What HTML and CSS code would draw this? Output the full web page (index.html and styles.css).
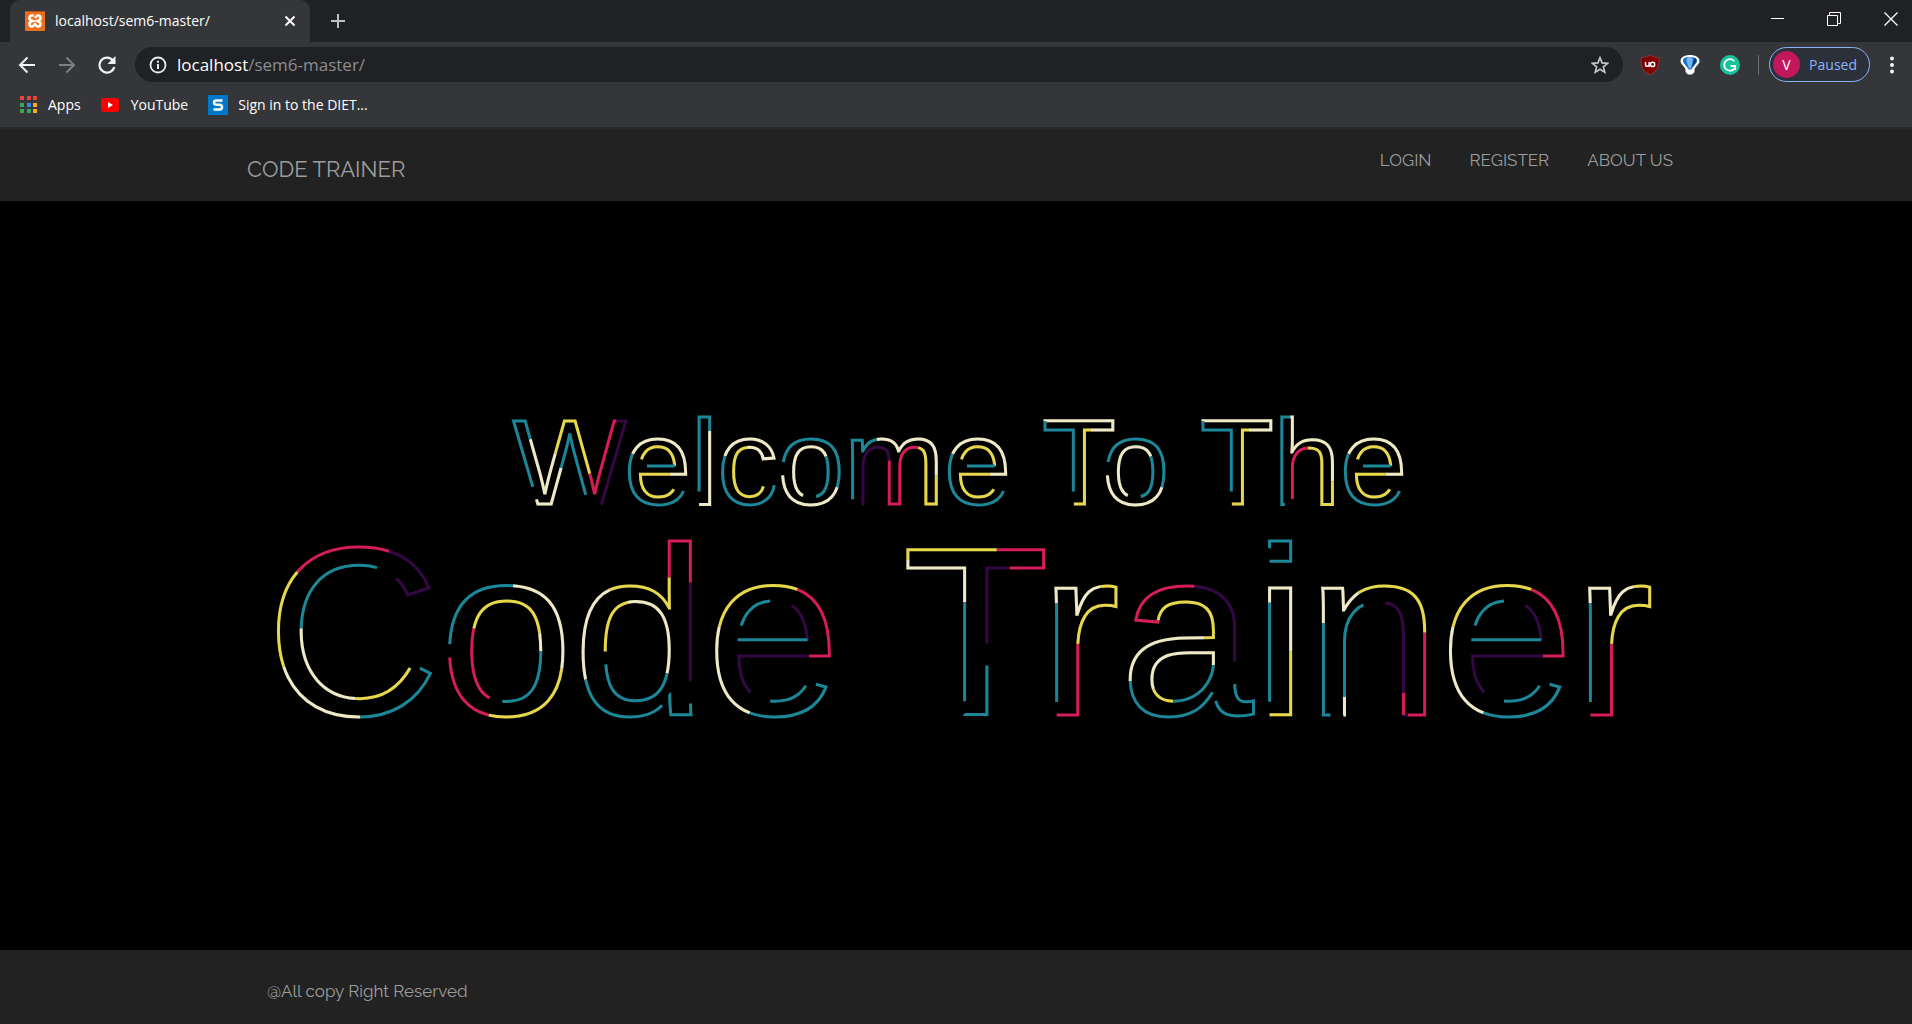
FILE: index.html
```html
<!DOCTYPE html>
<html lang="en">
<head>
<meta charset="utf-8">
<title>localhost/sem6-master/</title>
<link rel="stylesheet" href="styles.css">
</head>
<body>
<div class="browser">
  <div class="tab-strip">
    <div class="tab">
      <svg class="favicon" width="20" height="20" viewBox="0 0 20 20"><rect width="20" height="20" rx="1" fill="#e8701f"/><rect x="1" y="0" width="18" height="1" fill="#b9521a"/><path d="M8.800 4.500H6.500A2.500 2.500 0 0 0 5.800 9.200L7.500 10l-1.700.8A2.500 2.500 0 0 0 6.500 15.500h1.300L10 13l2.200 2.500h1.300a2.500 2.500 0 0 0 .7-4.700L12.500 10l1.700-.8a2.500 2.500 0 0 0-.7-4.700h-1.300L10 7" fill="none" stroke="#fff" stroke-width="2.600" stroke-linejoin="round"/><path d="M7.500 10h5" stroke="#fff" stroke-width="1.500"/></svg>
      <span class="tab-title">localhost/sem6-master/</span>
      <button class="tab-close" aria-label="Close tab"><svg width="12" height="12" viewBox="0 0 12 12"><path d="M1.500 1.500l9 9M10.500 1.500l-9 9" stroke="#fff" stroke-width="2"/></svg></button>
    </div>
    <button class="new-tab" aria-label="New tab"><svg width="16" height="16" viewBox="0 0 16 16"><path d="M8 1v14M1 8h14" stroke="#bdc1c6" stroke-width="2"/></svg></button>
    <div class="window-controls">
      <button aria-label="Minimize"><svg width="14" height="14" viewBox="0 0 14 14"><path d="M0 6.500h13" stroke="#fff"/></svg></button>
      <button aria-label="Restore"><svg width="14" height="14" viewBox="0 0 14 14"><path d="M.5 3.500h10v10H.5zM2.500 3.500v-3h11v11h-3" fill="none" stroke="#fff"/></svg></button>
      <button class="window-close" aria-label="Close"><svg width="14" height="14" viewBox="0 0 14 14"><path d="M.5.5l13 13M13.500.5l-13 13" stroke="#fff" stroke-width="1.300"/></svg></button>
    </div>
  </div>
  <div class="toolbar">
    <button class="tool" aria-label="Back"><svg width="18" height="18" viewBox="0 0 18 18"><path d="M17 9H2.500M9.500 1.500L2 9l7.500 7.500" fill="none" stroke="#f1f3f4" stroke-width="2"/></svg></button>
    <button class="tool" aria-label="Forward"><svg width="18" height="18" viewBox="0 0 18 18"><path d="M1 9h14.500M8.500 1.500L16 9l-7.500 7.500" fill="none" stroke="#7d7f82" stroke-width="2"/></svg></button>
    <button class="tool" aria-label="Reload"><svg width="18" height="18" viewBox="0 0 18 18"><path d="M15 4.500A7.500 7.500 0 1 0 16.300 11" fill="none" stroke="#f1f3f4" stroke-width="2.200"/><path d="M17.500 0v8h-8z" fill="#f1f3f4"/></svg></button>
    <div class="omnibox">
      <svg width="18" height="18" viewBox="0 0 18 18"><circle cx="9" cy="9" r="7.500" fill="none" stroke="#e8eaed" stroke-width="1.800"/><path d="M9 8v5M9 4.800v2" stroke="#e8eaed" stroke-width="2"/></svg>
      <span class="address">localhost<span class="path">/sem6-master/</span></span>
      <button class="bookmark-star" aria-label="Bookmark this page"><svg width="18" height="18" viewBox="0 0 18 18"><path d="M9 1.800l2.100 5.100 5.500.4-4.200 3.600 1.300 5.300L9 13.300l-4.700 2.900 1.300-5.300L1.400 7.300l5.500-.4z" fill="none" stroke="#c4c7ca" stroke-width="1.700"/></svg></button>
    </div>
    <button class="tool" aria-label="uBlock Origin"><svg width="20" height="22" viewBox="0 0 20 22"><path d="M10 1c3 2 6 2.500 9 2.500 0 8-.5 13-9 17.500C1.500 16.500 1 11.500 1 3.500 4 3.500 7 3 10 1z" fill="#800000" stroke="#a5484b" stroke-width=".6"/><path d="M5.500 8v2.500a1.800 1.800 0 0 0 3.600 0V8v4.800" fill="none" stroke="#fff" stroke-width="1.500"/><circle cx="12.600" cy="10.400" r="2.100" fill="none" stroke="#fff" stroke-width="1.500"/></svg></button>
    <button class="tool" aria-label="Extension"><svg width="20" height="22" viewBox="0 0 20 22"><path d="M10 1c5 0 9.500 2 9.500 6 0 3.500-4 5-5 8.500V18l-2.500 2.500H8L5.500 18v-2.500C4.500 12 .5 10.500.5 7c0-4 4.500-6 9.500-6z" fill="#fff"/><path d="M10 3c4 0 7 1 7 3.800 0 2.700-3.500 4.700-5.500 8.700h-3C6.500 11.500 3 9.500 3 6.800 3 4 6 3 10 3z" fill="#1673cc"/><path d="M10 3c2.500 0 3 2 2.500 4.500L11 14.500H9L6.500 7.500C6 5 7.500 3 10 3z" fill="#7ab5ec"/><path d="M14.500 3.800l2.300 2.700-5.300 8z" fill="#0a3478"/></svg></button>
    <button class="tool" aria-label="Grammarly"><svg width="20" height="20" viewBox="0 0 20 20"><circle cx="10" cy="10" r="10" fill="#15c39a"/><path d="M14.500 6.200A5.800 5.800 0 1 0 14.900 13" fill="none" stroke="#fff" stroke-width="1.800"/><path d="M10.500 11h4.700v4" fill="none" stroke="#fff" stroke-width="1.800"/></svg></button>
    <span class="divider"></span>
    <button class="profile"><span class="avatar">V</span><span>Paused</span></button>
    <button class="tool menu" aria-label="Menu"><svg width="4" height="18" viewBox="0 0 4 18"><g fill="#f1f3f4"><circle cx="2" cy="2.500" r="2"/><circle cx="2" cy="9" r="2"/><circle cx="2" cy="15.500" r="2"/></g></svg></button>
  </div>
  <div class="bookmarks">
    <a href="#"><svg width="18" height="18" viewBox="0 0 18 18"><path fill="#ea4335" d="M0 0h4v4H0zM7 0h4v4H7zM13 0h4v4h-4z"/><path fill="#34a853" d="M0 7h4v4H0zM0 13h4v4H0z"/><path fill="#2f88ee" d="M7 7h4v4H7z"/><path fill="#34a853" d="M7 13h4v4H7z"/><path fill="#fbab18" d="M13 7h4v4h-4zM13 13h4v4h-4z"/></svg>Apps</a>
    <a class="video" href="#"><svg width="18" height="14" viewBox="0 0 18 14"><rect width="18" height="14" rx="3" fill="#f00"/><path d="M7 4l5 3-5 3z" fill="#fff"/></svg>YouTube</a>
    <a href="#"><svg width="20" height="20" viewBox="0 0 20 20"><rect width="20" height="20" fill="#0078c9"/><path d="M14.500 5.500H8.500Q6 5.500 6 7.500T8.500 9.700h3Q14 9.700 14 12t-2.500 2.500H5.500" fill="none" stroke="#fff" stroke-width="2.500"/></svg>Sign in to the DIET...</a>
  </div>
</div>

<nav class="site-nav">
  <div class="container">
    <a class="brand" href="#">CODE TRAINER</a>
    <div class="links">
      <a href="#">LOGIN</a>
      <a href="#">REGISTER</a>
      <a href="#">ABOUT US</a>
    </div>
  </div>
</nav>

<main class="hero">
  <svg class="lettering">
    <defs>
      <g id="welcome">
        <text class="line-small" x="50%" y="50%" dy="-72"><tspan class="cap-w">W</tspan><tspan class="low-e">e</tspan><tspan>l</tspan><tspan class="low-c">c</tspan><tspan class="low-o">o</tspan><tspan class="low-m">m</tspan><tspan class="low-e">e</tspan> <tspan class="cap-t">T</tspan><tspan class="low-o">o</tspan> <tspan class="cap-t">T</tspan><tspan class="low-h">h</tspan><tspan class="low-e">e</tspan></text>
        <text class="line-large" x="50%" y="50%" dy="139"><tspan class="cap-c">C</tspan><tspan class="low-o">o</tspan><tspan>d</tspan><tspan class="low-e">e</tspan> <tspan class="cap-t">T</tspan><tspan>r</tspan><tspan class="low-a">a</tspan><tspan>i</tspan><tspan class="low-n">n</tspan><tspan class="low-e">e</tspan><tspan>r</tspan></text>
      </g>
    </defs>
    <use href="#welcome" class="copy purple"/>
    <use href="#welcome" class="copy pink"/>
    <use href="#welcome" class="copy yellow"/>
    <use href="#welcome" class="copy cream"/>
    <use href="#welcome" class="copy teal"/>
  </svg>
</main>

<footer class="site-footer">
  <div class="container"><p>@All copy Right Reserved</p></div>
</footer>
</body>
</html>
```
FILE: styles.css
```css
* { box-sizing: border-box; }

body {
  margin: 0;
  min-height: 100vh;
  display: flex;
  flex-direction: column;
  background: #000;
  font-family: Raleway, Lato, sans-serif;
}

button {
  display: flex;
  align-items: center;
  justify-content: center;
  padding: 0;
  border: 0;
  background: none;
  font: inherit;
  color: inherit;
}

a { color: inherit; text-decoration: none; }

svg { flex: none; }

/* Browser window */
.browser {
  background: #35363a;
  border-bottom: 2px solid #29292c;
  color: #fff;
  font: 14px/20px "Segoe UI", "Open Sans", sans-serif;
}

.tab-strip {
  display: flex;
  height: 42px;
  padding-left: 10px;
  background: #202124;
}

.tab {
  display: flex;
  align-items: center;
  width: 300px;
  padding: 0 14px 0 15px;
  border-radius: 10px 10px 0 0;
  background: #35363a;
}

.tab-title { margin-left: 10px; }
.tab-close { width: 12px; margin-left: auto; }
.new-tab { width: 56px; }

.window-controls {
  display: flex;
  height: 37px;
  margin-left: auto;
}

.window-controls button { width: 56px; }
.window-controls .window-close { width: 50px; padding-left: 8px; }

.toolbar {
  display: flex;
  align-items: center;
  height: 45px;
  padding-left: 7px;
}

.tool { width: 40px; height: 36px; }

.omnibox {
  display: flex;
  flex: 1;
  align-items: center;
  height: 35px;
  margin: 0 7px 0 8px;
  padding: 0 14px;
  border-radius: 18px;
  background: #202124;
  font-size: 17px;
}

.address { margin-left: 10px; }
.path { color: #8a8d91; }
.bookmark-star { margin-left: auto; }

.divider {
  width: 1px;
  height: 20px;
  margin: 0 10px 0 8px;
  background: #6b6d70;
}

.profile {
  width: 101px;
  height: 35px;
  padding: 0 12px 0 3px;
  justify-content: space-between;
  border: 1px solid #8ab4f8;
  border-radius: 18px;
  background: #2c303a;
  color: #8ab4f8;
}

.avatar {
  width: 27px;
  height: 27px;
  border-radius: 50%;
  background: #c2185b;
  color: #fff;
  line-height: 27px;
}

.menu { margin-left: 2px; }

.bookmarks {
  display: flex;
  gap: 20px;
  height: 40px;
  padding: 8px 20px;
}

.bookmarks a {
  display: flex;
  align-items: center;
  gap: 10px;
  height: 20px;
}

.bookmarks .video { gap: 12px; }

/* Site */
.container {
  display: flex;
  justify-content: space-between;
  width: 75%;
  margin: 0 auto;
}

.site-nav {
  height: 72px;
  background: #222;
  color: #9d9d9d;
}

.brand {
  padding: 24px 0 0 8px;
  font-size: 22px;
  line-height: 32px;
}

.links {
  display: flex;
  gap: 38px;
  padding-top: 19px;
  font-size: 17px;
  line-height: 24px;
}

.hero {
  display: flex;
  flex: 1;
  padding-left: 8px;
}

.lettering {
  flex: 1;
  font-family: Arial, "Liberation Sans", sans-serif;
}

.line-small, .line-large { text-anchor: middle; }
.line-small { font-size: 120px; }
.line-large { font-size: 240px; }

/* Each copy draws its own dash of the shared outline */
.copy {
  fill: none;
  stroke-width: 3px;
}

.teal { stroke: #1b8798; --start: 13px; }
.cream { stroke: #efeac5; --start: 112px; }
.yellow { stroke: #e7d84b; --start: 211px; }
.pink { stroke: #d61c59; --start: 310px; }
.purple { stroke: #360745; --start: 409px; }

tspan {
  stroke-dasharray: 99px 418px;
  stroke-dashoffset: calc(0px - var(--start));
}

/* --outline is the outline's length and --from the place where the
   dashes begin, both in font units of 1/2048 em */
tspan[class] {
  --n: calc(var(--outline) * 1em / 2048);
  --d1: clamp(0px, var(--n) - var(--start), 99px);
  --d2: clamp(0px, var(--n) - var(--start) - 517px, 99px);
  --g1: min(418px, var(--n) - var(--d1));
  --g2: calc(var(--n) - var(--d1) - var(--g1) - var(--d2));
  stroke-dasharray: var(--d1) var(--g1) var(--d2) var(--g2);
  stroke-dashoffset: calc(0px - var(--start) - var(--from) * 1em / 2048);
}

.cap-c { --outline: 6779; --from: 2235; }
.cap-t { --outline: 5134; --from: 1443; }
.cap-w { --outline: 11683; --from: 3026; }
.low-a { --outline: 5290; --from: 4840; }
.low-c { --outline: 4847; --from: 890; }
.low-e { --outline: 4870; --from: 870; }
.low-h { --outline: 6300; --from: 4046; }
.low-m { --outline: 8470; --from: 2225; }
.low-n { --outline: 5530; --from: 2230; }
.low-o { --outline: 3290; --from: 1640; }

.site-footer {
  height: 74px;
  background: #222;
  color: #9d9d9d;
}

.site-footer p {
  margin: 0;
  padding: 29px 0 0 28px;
  font-size: 17px;
  line-height: 24px;
}
```
